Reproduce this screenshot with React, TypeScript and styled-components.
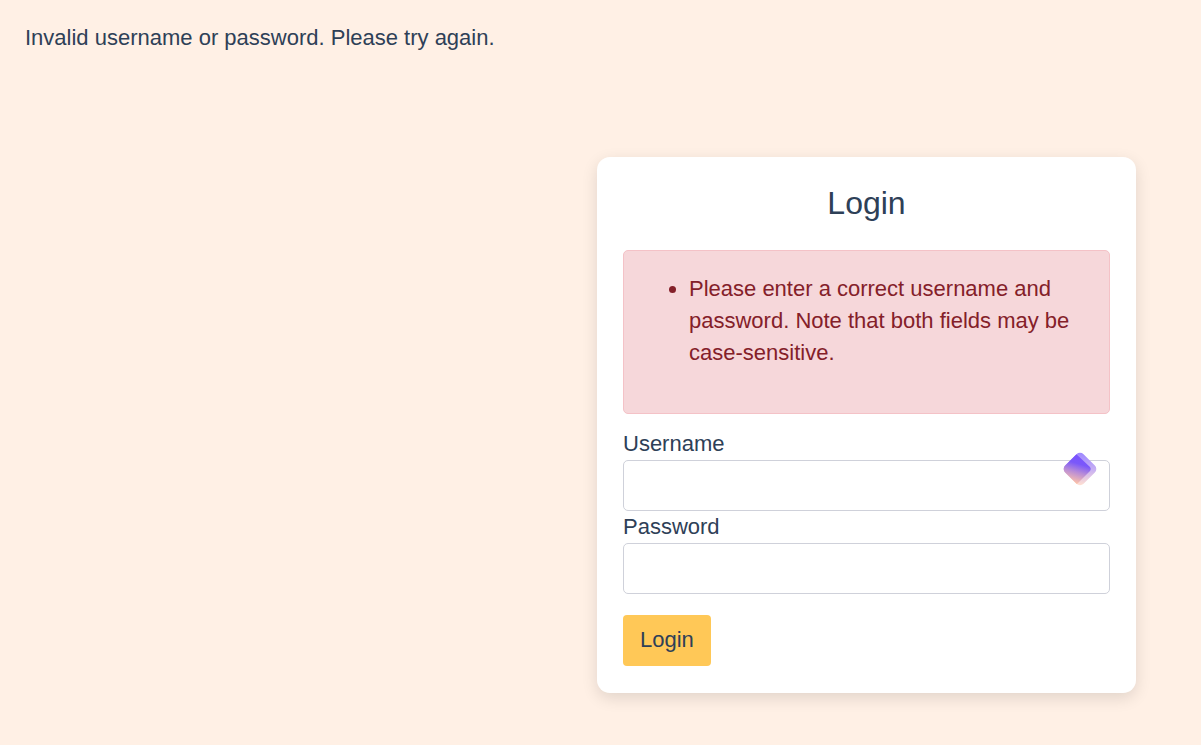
import React from "react";
import styled, { createGlobalStyle } from "styled-components";

const GlobalStyle = createGlobalStyle`
  *, *::before, *::after { box-sizing: border-box; }
  body {
    margin: 0;
    background: #fff0e5;
    color: #2e4057;
    font-family: "Liberation Sans", Arial, sans-serif;
    font-size: 22px;
    line-height: 32px;
  }
`;

const Page = styled.div`
  display: flex;
  flex-direction: column;
  gap: 103px;
  min-height: 100vh;
  padding: 22px 65px 52px 25px;
`;

const Message = styled.p`
  margin: 0;
`;

const Card = styled.main`
  align-self: flex-end;
  width: 100%;
  max-width: 539px;
  padding: 26px 26px 27px;
  background: #fff;
  border-radius: 13px;
  box-shadow: 0 5px 16px rgba(0, 0, 0, 0.12);
`;

const Title = styled.h1`
  margin: 0 0 27px;
  font-size: 32px;
  font-weight: 400;
  line-height: 40px;
  text-align: center;
`;

const Alert = styled.div`
  margin-bottom: 14px;
  padding: 22px 25px 44px;
  color: #842029;
  background: #f6d7da;
  border: 1px solid #f4c2c7;
  border-radius: 5px;
`;

const ErrorList = styled.ul`
  margin: 0;
  padding-left: 40px;
`;

const Form = styled.form`
  display: flex;
  flex-direction: column;
  align-items: flex-start;
`;

const Label = styled.label`
  line-height: 32px;
`;

const Field = styled.div`
  position: relative;
  display: flex;
  width: 100%;
`;

const Input = styled.input`
  width: 100%;
  height: 51px;
  padding: 8px 17px;
  color: inherit;
  font: inherit;
  background: #fff;
  border: 1px solid #cfd1da;
  border-radius: 5px;
`;

const Badge = styled.svg`
  position: absolute;
  top: -8px;
  right: 13px;
  width: 34px;
  height: 34px;
`;

const SubmitButton = styled.button`
  margin-top: 21px;
  height: 51px;
  padding: 0 17px 2px;
  color: inherit;
  font: inherit;
  background: #ffc857;
  border: 0;
  border-radius: 4px;
`;

function AutofillBadge() {
  return (
    <Badge viewBox="0 0 34 34" aria-hidden="true">
      <defs>
        <linearGradient id="front" x1="19" y1="4" x2="11" y2="31" gradientUnits="userSpaceOnUse">
          <stop offset="0" stopColor="#7a52ff" />
          <stop offset="0.3" stopColor="#7a58fa" />
          <stop offset="0.6" stopColor="#b78bd8" />
          <stop offset="1" stopColor="#ffc4a8" />
        </linearGradient>
        <linearGradient id="back" x1="20" y1="2" x2="18" y2="33" gradientUnits="userSpaceOnUse">
          <stop offset="0" stopColor="#a08aff" />
          <stop offset="0.5" stopColor="#c9b2f2" />
          <stop offset="1" stopColor="#ffdfd2" />
        </linearGradient>
        <clipPath id="outline">
          <rect x="4" y="4" width="26" height="26" rx="5" transform="rotate(45 17 17)" />
        </clipPath>
      </defs>
      <g clipPath="url(#outline)">
        <rect width="34" height="34" fill="url(#back)" />
        <path d="M0 0H11L26.500 14.500Q29 17 26.500 19.500L12 34H0Z" fill="url(#front)" />
      </g>
    </Badge>
  );
}

export default function App() {
  return (
    <>
      <GlobalStyle />
      <Page>
        <Message>Invalid username or password. Please try again.</Message>
        <Card>
          <Title>Login</Title>
          <Alert role="alert">
            <ErrorList>
              <li>
                Please enter a correct username and password. Note that both fields may be
                case-sensitive.
              </li>
            </ErrorList>
          </Alert>
          <Form onSubmit={(event) => event.preventDefault()}>
            <Label htmlFor="username">Username</Label>
            <Field>
              <Input id="username" name="username" type="text" />
              <AutofillBadge />
            </Field>
            <Label htmlFor="password">Password</Label>
            <Field>
              <Input id="password" name="password" type="password" />
            </Field>
            <SubmitButton type="submit">Login</SubmitButton>
          </Form>
        </Card>
      </Page>
    </>
  );
}
